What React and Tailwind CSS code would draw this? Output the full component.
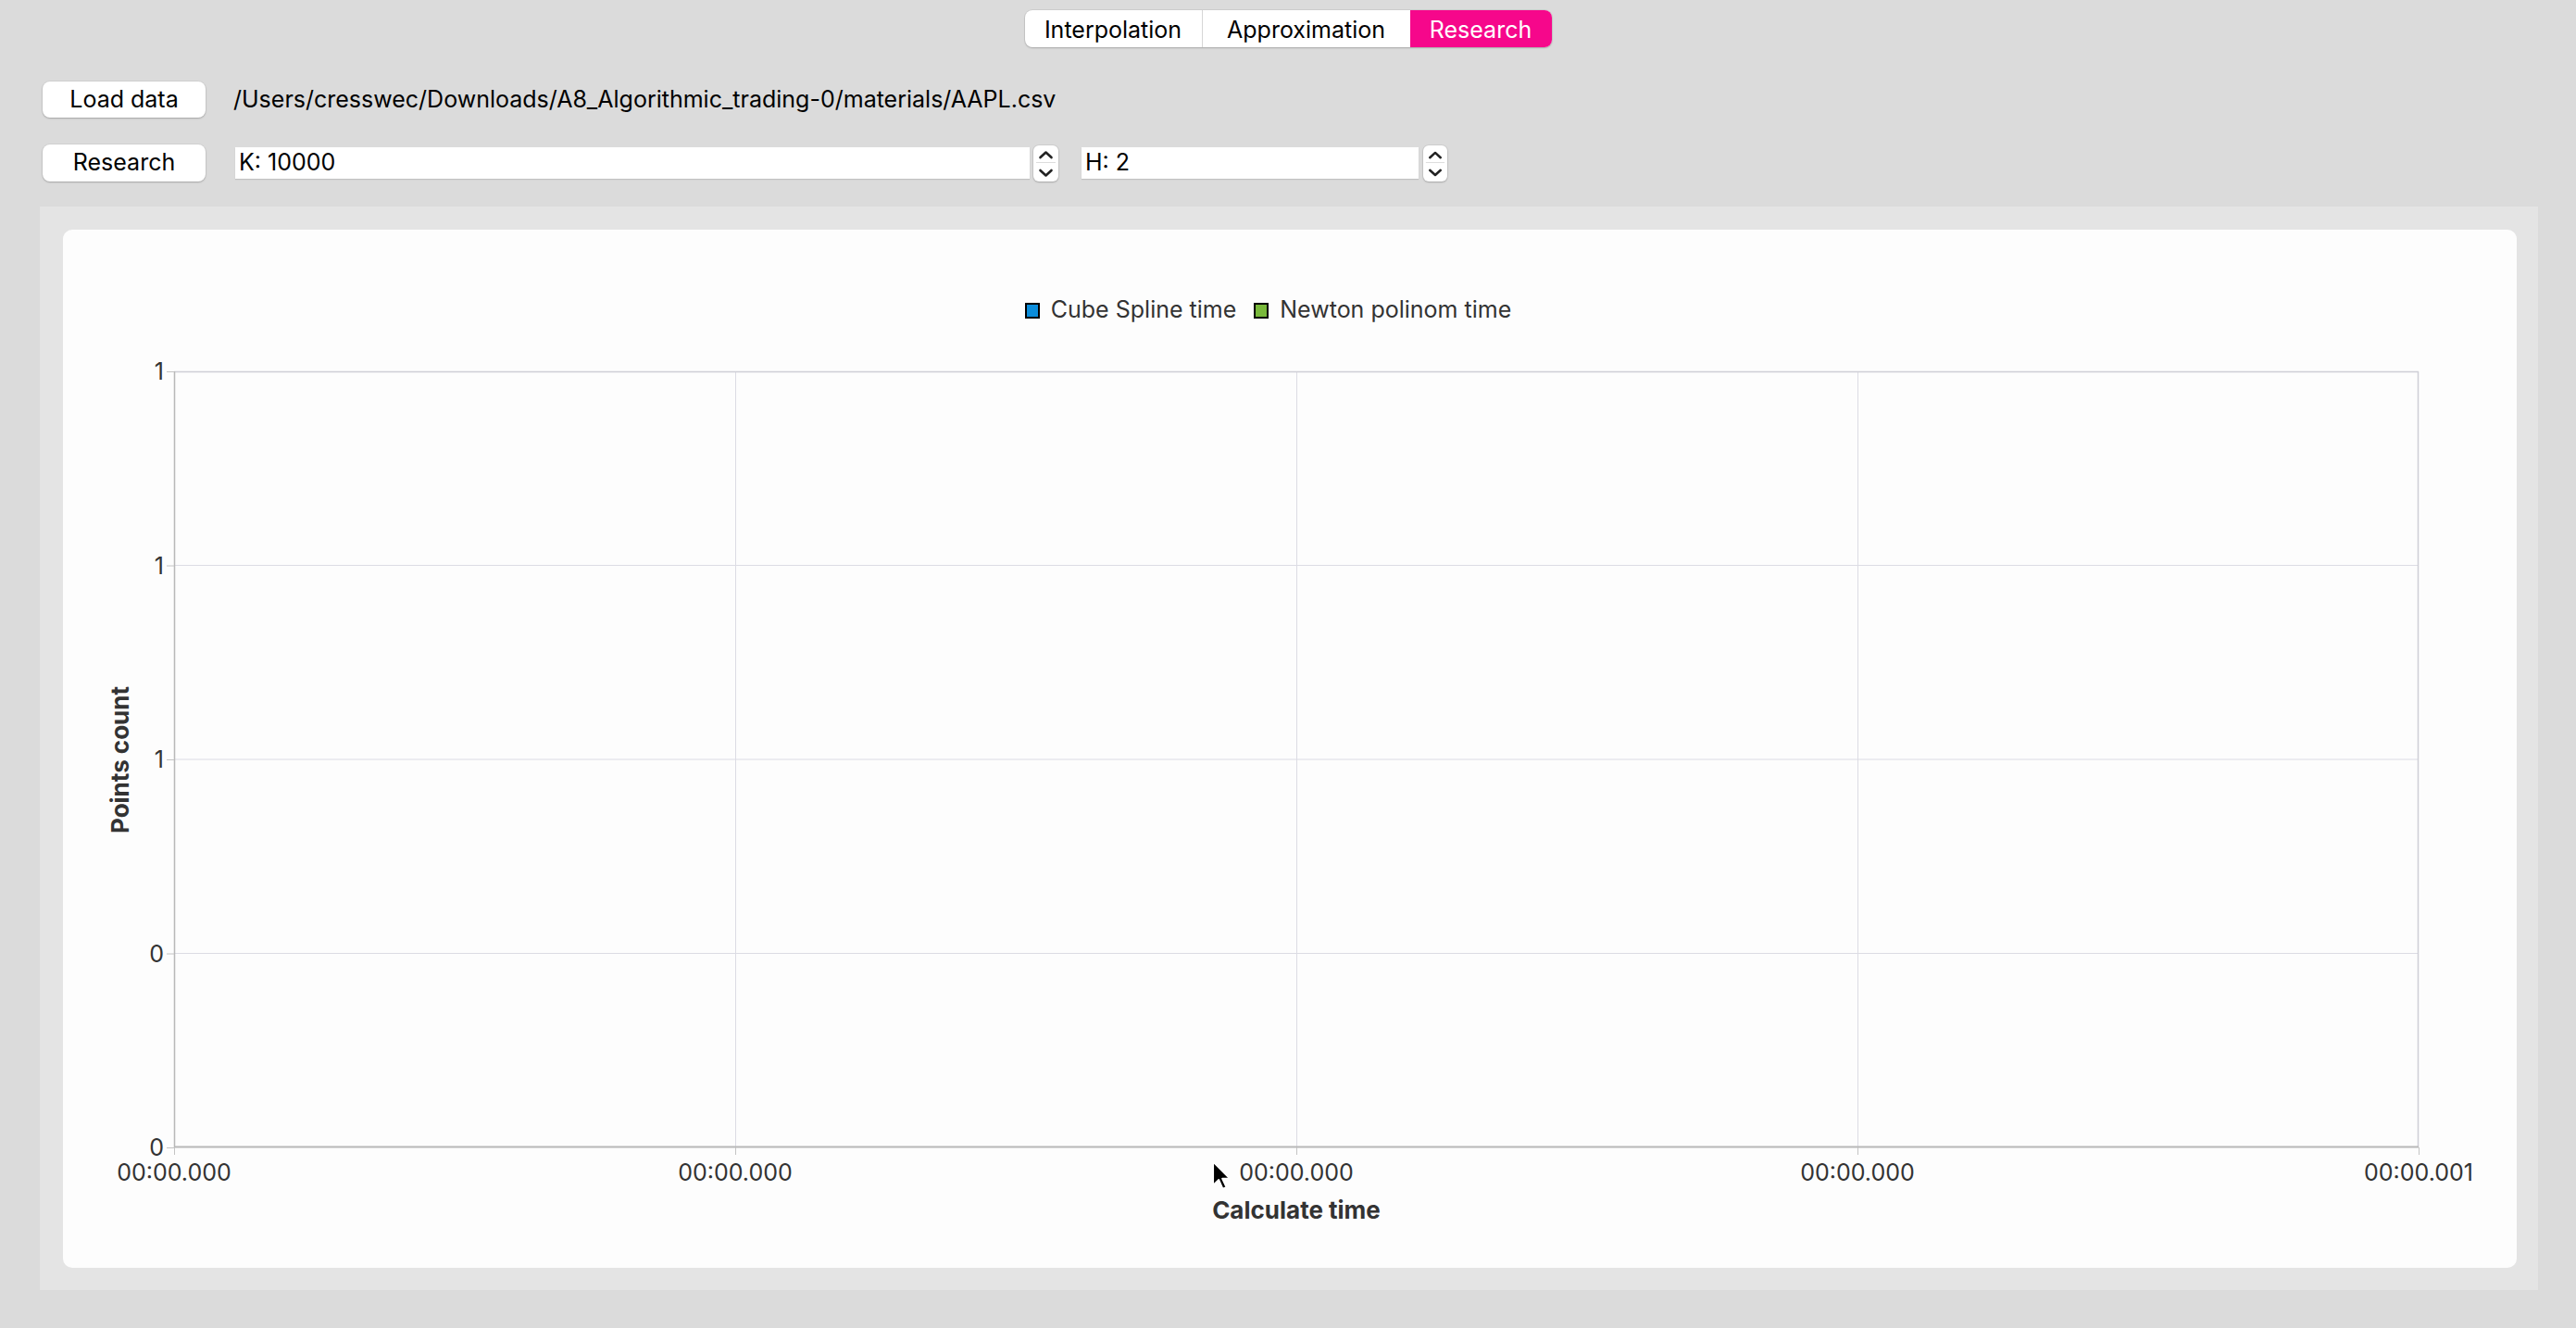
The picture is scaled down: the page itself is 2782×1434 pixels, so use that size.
import React from 'react';

const Spinner = ({ className }) => (
    <div className={`h-[39px] rounded-[6px] bg-white shadow-[0_0_0_1px_rgba(0,0,0,0.05),0_1px_2px_rgba(0,0,0,0.2)] ${className}`}>
        <svg viewBox="0 0 27 39" className="w-full h-full">
            <path d="M7.5 13 L13.5 7.5 L19.5 13" fill="none" stroke="#222" strokeWidth="2.6" strokeLinecap="round" strokeLinejoin="round" />
            <line x1="3" y1="18.5" x2="24" y2="18.5" stroke="#dcdcdc" strokeWidth="1" />
            <path d="M7.5 27 L13.5 32.5 L19.5 27" fill="none" stroke="#222" strokeWidth="2.6" strokeLinecap="round" strokeLinejoin="round" />
        </svg>
    </div>
);

const PlotGrid = () => {
    const w = 2424;
    const h = 838;
    const xs = [0, 606, 1212, 1818, 2424];
    const ys = [0, 209.5, 419, 628.5, 838];
    return (
        <svg width={w} height={h} className="overflow-visible block">
            {/* grid */}
            {xs.slice(1, 4).map((x) => (
                <line key={`gx${x}`} x1={x + 0.5} y1="0" x2={x + 0.5} y2={h} stroke="#dcdce4" strokeWidth="1" />
            ))}
            {ys.slice(1, 4).map((y) => (
                <line key={`gy${y}`} x1="0" y1={y} x2={w} y2={y} stroke="#dcdce4" strokeWidth="1" />
            ))}
            <line x1="0" y1="0.5" x2={w} y2="0.5" stroke="#cfcfd6" strokeWidth="1.5" />
            <line x1={w - 0.5} y1="0" x2={w - 0.5} y2={h} stroke="#cfcfd6" strokeWidth="1.5" />
            {/* axes */}
            <line x1="0.5" y1="0" x2="0.5" y2={h} stroke="#b8b8b8" strokeWidth="1.5" />
            <line x1="0" y1={h - 0.5} x2={w} y2={h - 0.5} stroke="#b8b8b8" strokeWidth="2" />
            {/* ticks */}
            {xs.map((x) => (
                <line key={`tx${x}`} x1={x + 0.5} y1={h} x2={x + 0.5} y2={h + 8} stroke="#c4c4c4" strokeWidth="1" />
            ))}
            {ys.map((y) => (
                <line key={`ty${y}`} x1="-8" y1={y + 0.5} x2="0" y2={y + 0.5} stroke="#c4c4c4" strokeWidth="1" />
            ))}
        </svg>
    );
};

const App = () => {
    const yLabels = ['1', '1', '1', '0', '0'];
    const xLabels = ['00:00.000', '00:00.000', '00:00.000', '00:00.000', '00:00.001'];

    return (
        <div className="w-[2782px] h-[1434px] bg-[#dbdbdb] flex flex-col overflow-hidden font-[Inter,sans-serif] text-black">
            {/* Tabs */}
            <div className="pt-[11px] flex justify-center">
                <div className="flex h-[40px] rounded-[8px] bg-white overflow-hidden shadow-[0_0_0_1px_rgba(0,0,0,0.06),0_1px_2px_rgba(0,0,0,0.18)] text-[25px]">
                    <div className="w-[192px] pt-[3px] flex items-center justify-center border-r border-[#d6d6d6]">Interpolation</div>
                    <div className="w-[224px] pt-[3px] flex items-center justify-center">Approximation</div>
                    <div className="w-[153px] pt-[3px] flex items-center justify-center bg-[#f6078b] text-white">Research</div>
                </div>
            </div>

            {/* Load row */}
            <div className="mt-[37px] pl-[46px] h-[39px] flex items-center">
                <button className="w-[176px] h-[39px] rounded-[8px] bg-white shadow-[0_0_0_1px_rgba(0,0,0,0.04),0_1px_2px_rgba(0,0,0,0.22)] text-[25px]">
                    Load data
                </button>
                <span className="ml-[30px] text-[25px]">/Users/cresswec/Downloads/A8_Algorithmic_trading-0/materials/AAPL.csv</span>
            </div>

            {/* Research row */}
            <div className="mt-[29px] pl-[46px] h-[40px] flex items-center">
                <button className="w-[176px] h-[40px] rounded-[8px] bg-white shadow-[0_0_0_1px_rgba(0,0,0,0.04),0_1px_2px_rgba(0,0,0,0.22)] text-[25px]">
                    Research
                </button>
                <div className="ml-[32px] w-[858px] h-[34px] bg-white shadow-[0_1px_1px_rgba(0,0,0,0.12)] flex items-center pl-[4px] text-[25px]">
                    K: 10000
                </div>
                <Spinner className="ml-[4px] w-[27px]" />
                <div className="ml-[25px] w-[364px] h-[34px] bg-white shadow-[0_1px_1px_rgba(0,0,0,0.12)] flex items-center pl-[4px] text-[25px]">
                    H: 2
                </div>
                <Spinner className="ml-[5px] w-[26px]" />
            </div>

            {/* Chart container */}
            <div className="mt-[27px] ml-[43px] mr-[41px] h-[1170px] bg-[#e4e4e4] pt-[25px] pl-[25px] pr-[23px]">
                <div className="relative h-[1121px] rounded-[10px] bg-[#fdfdfd] flex flex-col text-[#333333]">
                    {/* Legend */}
                    <div className="mt-[75px] h-[24px] flex items-center justify-center pr-[47px] text-[25px]">
                        <span className="w-[16px] h-[17px] border-2 border-black bg-[#0b8ddb]" />
                        <span className="ml-[12px]">Cube Spline time</span>
                        <span className="ml-[19px] w-[16px] h-[17px] border-2 border-black bg-[#79b93b]" />
                        <span className="ml-[12px]">Newton polinom time</span>
                    </div>

                    {/* Plot row */}
                    <div className="mt-[54px] flex">
                        <div className="w-[84px] pl-[48px] flex items-center">
                            <span className="[writing-mode:vertical-rl] rotate-180 font-bold text-[26px] leading-[28px]">Points count</span>
                        </div>
                        <div className="w-[25px] h-[866px] -my-[14px] flex flex-col justify-between items-end text-[25px] text-[#333333]">
                            {yLabels.map((l, i) => (
                                <span key={i} className="h-[28px] leading-[28px]">{l}</span>
                            ))}
                        </div>
                        <div className="ml-[11px]">
                            <PlotGrid />
                        </div>
                    </div>

                    {/* X labels */}
                    <div className="mt-[13px] ml-[56px] w-[2552px] flex justify-between text-[25px]">
                        {xLabels.map((l, i) => (
                            <span key={i} className="w-[128px] h-[28px] leading-[28px] text-center">{l}</span>
                        ))}
                    </div>

                    {/* X title */}
                    <div className="mt-[13px] ml-[120px] w-[2424px] text-center font-bold text-[26px] leading-[28px]">
                        Calculate time
                    </div>

                    {/* Mouse cursor */}
                    <svg className="absolute left-[1240px] top-[1004px]" width="24" height="36" viewBox="0 0 22 32">
                        <path d="M2 2 L2 25 L7.5 19.5 L11.5 28.5 L15 27 L11 18.5 L18.5 18.5 Z" fill="#000" stroke="#fff" strokeWidth="1.6" strokeLinejoin="round" />
                    </svg>
                </div>
            </div>
        </div>
    );
};

export default App;
